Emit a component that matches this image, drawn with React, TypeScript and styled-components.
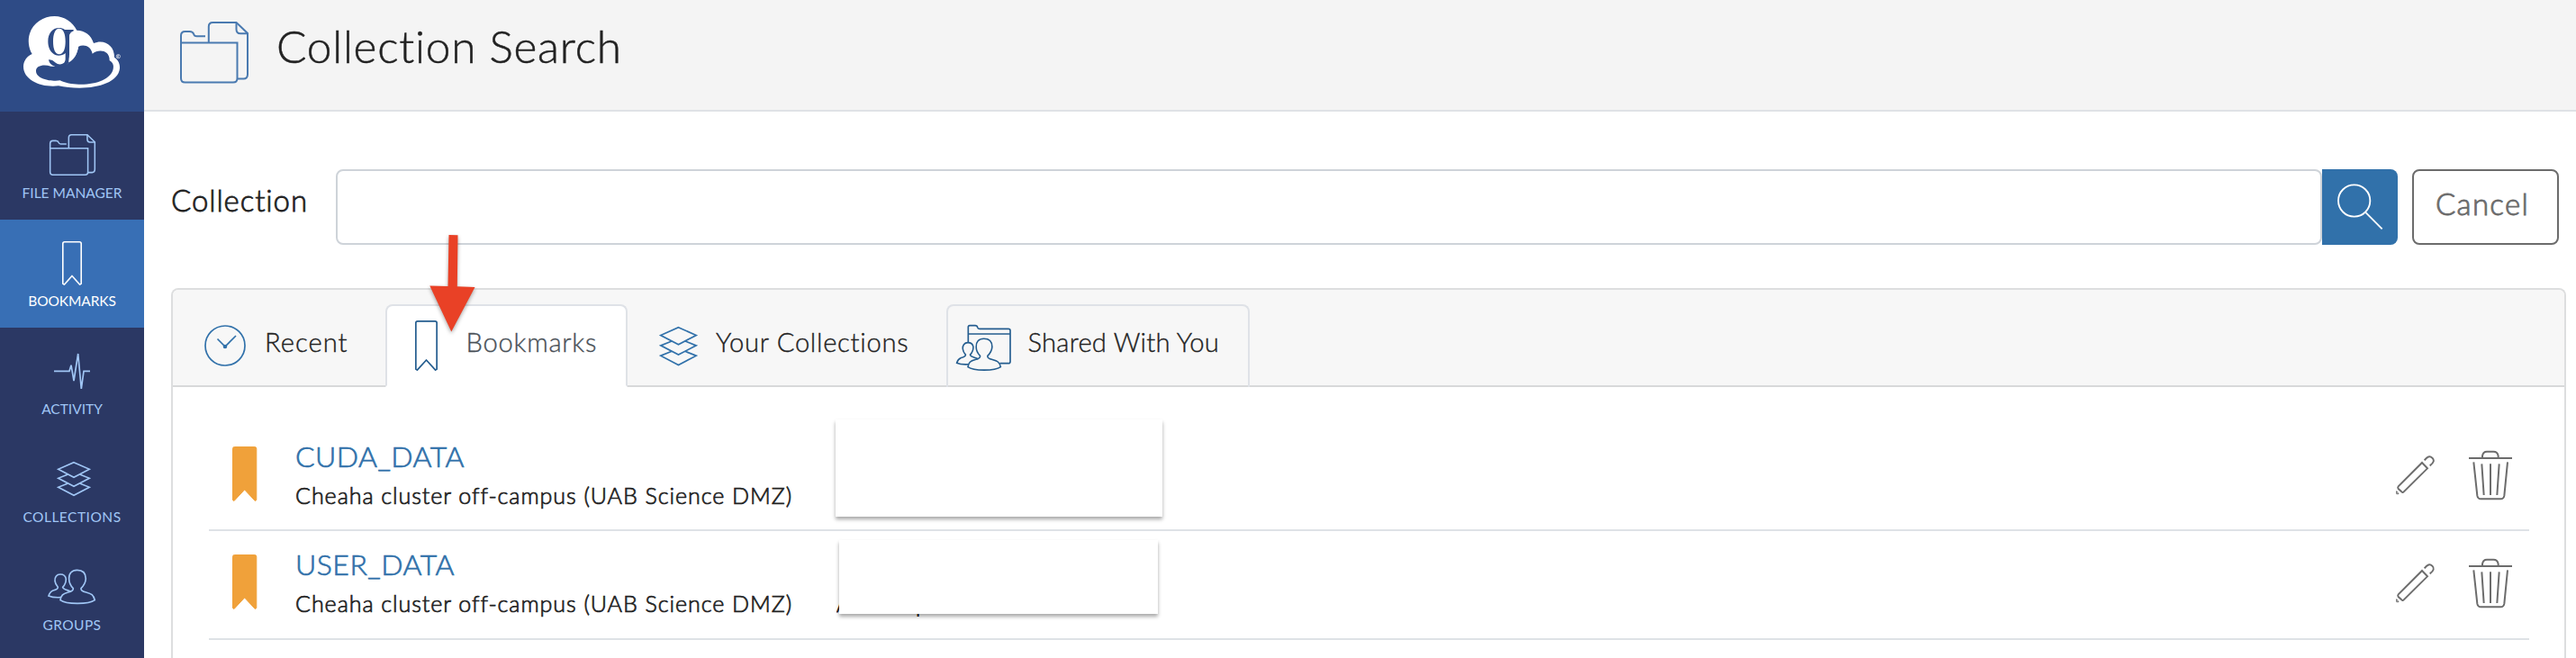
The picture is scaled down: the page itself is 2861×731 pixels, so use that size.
import React from 'react';
import styled, { createGlobalStyle } from 'styled-components';

const GlobalStyle = createGlobalStyle`
  *, *::before, *::after { box-sizing: border-box; }
  body { margin: 0; background: #fff; font-family: Lato, "Open Sans", sans-serif; color: #222; }
  svg { display: block; flex: none; fill: none; overflow: visible; }
`;

const Page = styled.div`
  display: flex;
  height: 731px;
  overflow: hidden;
  font-weight: 300;
`;

const Sidebar = styled.nav`
  flex: none;
  width: 160px;
  background: #2b3864;
`;

const LogoBox = styled.div`
  height: 124px;
  padding: 15px 0 0 23px;
  background: #2e4b86;
`;

const NavItem = styled.a<{ $active?: boolean }>`
  display: flex;
  flex-direction: column;
  align-items: center;
  height: 120px;
  color: ${p => (p.$active ? '#fff' : '#a0c6f5')};
  background: ${p => (p.$active ? '#386fb5' : 'transparent')};
`;

const NavIcon = styled.div<{ $shift?: number }>`
  display: flex;
  align-items: center;
  height: 72px;
  padding-top: 24px;
  margin: 0 0 8px ${p => p.$shift ?? 0}px;
`;

const NavLabel = styled.span<{ $spacing: number }>`
  font-size: 15.5px;
  font-weight: 400;
  line-height: 20px;
  white-space: nowrap;
  letter-spacing: ${p => p.$spacing}px;
`;

const Main = styled.main`
  flex: 1;
  min-width: 0;
  display: flex;
  flex-direction: column;
`;

const Header = styled.header`
  display: flex;
  gap: 31px;
  height: 124px;
  padding: 23.7px 0 0 40px;
  background: #f4f4f4;
  border-bottom: 2px solid #dfe2e6;
  color: #4a7ab0;
`;

const Title = styled.h1`
  margin: -2.6px 0 0;
  font-size: 49.5px;
  font-weight: 300;
  line-height: 60px;
  letter-spacing: 0.78px;
  color: #222;
  -webkit-text-stroke: 0.5px currentColor;
`;

const SearchForm = styled.div`
  display: flex;
  height: 84px;
  margin: 64px 19px 0 29px;
`;

const SearchLabel = styled.label`
  width: 184px;
  padding-left: 1px;
  font-size: 33px;
  line-height: 69px;
  letter-spacing: 0.9px;
  -webkit-text-stroke: 0.8px currentColor;
`;

const SearchInput = styled.input`
  flex: 1;
  min-width: 0;
  height: 84px;
  padding: 0 20px;
  font: inherit;
  background: #fff;
  border: 2px solid #ced3d9;
  border-radius: 8px;
  outline: none;
`;

const SearchButton = styled.button`
  display: flex;
  align-items: flex-start;
  width: 84px;
  height: 84px;
  margin: 0 16px 0 0;
  padding: 16px 0 0 17px;
  border: 0;
  border-radius: 0 8px 8px 0;
  background: #3171aa;
  color: #fff;
`;

const CancelButton = styled.button`
  width: 163px;
  height: 84px;
  padding: 0 0 8px 24px;
  text-align: left;
  font-family: inherit;
  font-size: 33px;
  font-weight: 300;
  line-height: 72px;
  letter-spacing: 1.3px;
  color: #6c6c6c;
  background: #fff;
  border: 2px solid #6c6c6c;
  border-radius: 8px;
  -webkit-text-stroke: 0.9px currentColor;
`;

const Panel = styled.section`
  flex: 1;
  margin: 48px 11px 0 30px;
  border: 2px solid #dddedf;
  border-bottom: 0;
  border-radius: 8px 8px 0 0;
`;

const TabBar = styled.div`
  display: flex;
  height: 108px;
  padding-top: 16px;
  background: #f7f7f7;
  border-bottom: 2px solid #d8d9da;
  border-radius: 6px 6px 0 0;
`;

const Tab = styled.div<{ $width: number; $inset: number; $state?: 'active' | 'outlined' }>`
  display: flex;
  width: ${p => p.$width}px;
  height: 92px;
  padding-left: ${p => p.$inset}px;
  border: 2px solid ${p => (p.$state ? '#dfe2e7' : 'transparent')};
  border-bottom-color: ${p => (p.$state === 'active' ? '#fff' : 'transparent')};
  border-bottom-width: ${p => (p.$state === 'active' ? 2 : 0)}px;
  border-radius: 8px 8px 0 0;
  background: ${p => (p.$state === 'active' ? '#fff' : 'transparent')};
  color: ${p => (p.$state ? '#245d8f' : '#3171aa')};
`;

const TabIcon = styled.div<{ $top: number; $gap: number }>`
  margin: ${p => p.$top}px ${p => p.$gap}px 0 0;
`;

const TabLabel = styled.span<{ $spacing: number; $muted?: boolean }>`
  font-size: 29.2px;
  line-height: 80px;
  white-space: nowrap;
  letter-spacing: ${p => p.$spacing}px;
  color: ${p => (p.$muted ? '#495057' : '#222')};
  -webkit-text-stroke: 0.35px currentColor;
`;

const List = styled.div`
  padding: 40px 39px 0 40px;
`;

const Row = styled.div`
  position: relative;
  display: flex;
  height: 120px;
  padding: 0 18px 0 26px;
  border-bottom: 2px solid #dee2e6;

  & + & { height: 121px; }
`;

const RowMark = styled.div`
  margin: 26px 42.7px 0 0;
  color: #f0a13a;
`;

const RowText = styled.div`
  width: 551px;
  padding-top: 16.6px;
  white-space: nowrap;
`;

const RowName = styled.div<{ $spacing: number }>`
  font-size: 32px;
  line-height: 40px;
  letter-spacing: ${p => p.$spacing}px;
  color: #3171aa;
  -webkit-text-stroke: 0.7px currentColor;
`;

const RowSource = styled.div`
  margin-top: 3.6px;
  font-size: 25.1px;
  line-height: 40px;
  letter-spacing: 0.93px;
  -webkit-text-stroke: 0.7px currentColor;
`;

const RowPath = styled.div`
  display: flex;
  gap: 72px;
  height: 34.5px;
  margin: 60px 0 0 50px;
  overflow: hidden;
  font-size: 24.5px;
  line-height: 41px;
  -webkit-text-stroke: 0.8px currentColor;
`;

const Cover = styled.div<{ $x: number; $y: number; $w: number; $h: number }>`
  position: absolute;
  left: ${p => p.$x}px;
  top: ${p => p.$y}px;
  width: ${p => p.$w}px;
  height: ${p => p.$h}px;
  background: #fff;
  box-shadow: 0 3px 4px rgba(0, 0, 0, 0.34);
`;

const RowActions = styled.div`
  display: flex;
  gap: 37px;
  margin-left: auto;
  padding-top: 30px;
  color: #6c6c6c;
`;

const Arrow = styled.div`
  position: absolute;
  left: 477px;
  top: 261px;
  filter: drop-shadow(0 2px 2px rgba(0, 0, 0, 0.35));
`;

const Logo = () => (
  <svg width="114" height="87" viewBox="69 45 342 261">
    <path
      fill="#fff"
      d="M107 180C95 161 92 133 99 112C110 76 145 54 182 54C214 54 243 74 256 101C282 101 304 117 312 144C346 129 382 150 381 191C395 200 400 214 399 228C394 272 332 293 265 293C240 293 215 291 195 286C140 293 78 268 78 222C78 203 90 187 107 180Z"
    />
    <path
      fill="#2e4b86"
      d="M190 222C206 222 224 216 231 207C250 196 258 176 261 155C280 146 303 153 308 179C328 163 366 166 365 202C376 208 380 218 377 230C370 263 320 283 262 281C240 281 215 276 200 268C172 272 120 264 120 236C120 219 145 213 170 221Z"
    />
    <path
      fill="#2e4b86"
      fillRule="evenodd"
      d="M197 93C174 93 160 112 160 138C160 157 167 172 180 181C187 187 208 187 218 177L218 196C218 215 200 217 190 212C182 208 176 198 162 199C164 212 174 220 190 224L215 222L232 207C228 200 231 192 231 180L231 120C231 112 236 109 245 105L245 99L216 99C210 95 204 93 197 93ZM197 95C211 95 218 112 218 138C218 164 211 181 197 181C184 181 177 164 177 138C177 112 184 95 197 95Z"
    />
    <path fill="#fff" d="M233 118C233 107 243 102 256 101L268 140L261 157C257 178 248 196 228 208C234 190 232 150 233 118Z" />
    <circle cx="394" cy="188" r="6.5" stroke="#fff" strokeWidth="1.8" />
    <path d="M392 192V184.500H395.500Q397 187 392 188.500L396.500 192" stroke="#fff" strokeWidth="1.6" />
  </svg>
);

const FilesIcon = ({ width, stroke }: { width: number; stroke: number }) => (
  <svg width={width} height={(width * 69) / 76} viewBox="0 0 76 69" stroke="currentColor" strokeWidth={stroke}>
    <path d="M1 23.500V15.500Q1 11 5.500 11H10.500Q14.200 11 15.200 14Q15.800 16.300 18.500 16.300H28" />
    <path d="M1 23.500H63.500V63Q63.500 67.500 59 67.500H5.500Q1 67.500 1 63Z" />
    <path d="M31.800 23V5.500Q31.800 1 36.300 1H62.500L75 13V58.500Q75 63.500 70.500 63.500H64" />
    <path d="M62.500 1V8.500Q62.500 13.300 67 13.300H75" />
  </svg>
);

const BookmarkIcon = ({ width, height, stroke, filled }: { width: number; height: number; stroke: number; filled?: boolean }) => {
  const s = stroke / 2;
  const r = width - s;
  const b = height - s;
  const notch = height - width * 0.48;
  const d = `M${s} ${s + 2}Q${s} ${s} ${s + 2} ${s}H${r - 2}Q${r} ${s} ${r} ${s + 2}V${b - 1}L${r - 1.5} ${b}L${width / 2} ${notch}L${s + 1.5} ${b}L${s} ${b - 1}Z`;
  return (
    <svg width={width} height={height} stroke="currentColor" strokeWidth={stroke} strokeLinejoin="round">
      <path d={d} fill={filled ? 'currentColor' : 'none'} />
    </svg>
  );
};

const PulseIcon = () => (
  <svg width="40" height="41" stroke="currentColor" strokeWidth="1.7">
    <path d="M0 20.300H17L19 13.700L22 31L26.700 1L30.300 40L33 20.300H40" />
  </svg>
);

const LayersIcon = ({ width, stroke }: { width: number; stroke: number }) => (
  <svg width={width} height={(width * 38) / 36} viewBox="0 0 36 38" stroke="currentColor" strokeWidth={stroke}>
    <path d="M18 .7L35.300 8.300L18 17.300L.7 8.300Z" />
    <path d="M11.500 14L.7 18.300L18 27.300L35.300 18.300L24.500 14" />
    <path d="M11.500 24L.7 28.300L18 37.300L35.300 28.300L24.500 24" />
  </svg>
);

const PeopleShapes = () => (
  <>
    <path d="M98 4C80 4 70 16 71 33C71 48 78 58 85 65C86 73 78 76 68 78C50 83 45 88 42 104C62 119 136 119 157 104C152 86 146 83 128 78C118 76 110 72 111 65C118 58 126 48 127 33C127 14 116 4 98 4Z" />
    <path d="M61 33C59 22 52 18 42 18C29 18 23 28 24 40C25 50 29 55 34 61C34 67 28 70 18 72C8 76 6 80 3 90C14 95 28 96 44 95M61 33C61 47 55 56 50 61C51 68 62 69 78 76" />
  </>
);

const PeopleIcon = () => (
  <svg width="53.300" height="40" viewBox="0 0 160 120" stroke="currentColor" strokeWidth="5">
    <PeopleShapes />
  </svg>
);

const ClockIcon = () => (
  <svg width="46" height="46" stroke="currentColor" strokeWidth="1.700">
    <circle cx="23" cy="23" r="22" />
    <path d="M14.500 15.500L23 24L35 12" />
    <circle cx="23" cy="24" r="2.300" fill="currentColor" stroke="none" />
  </svg>
);

const SharedIcon = () => (
  <svg width="64" height="54.700" viewBox="60 118 192 164" stroke="currentColor" strokeWidth="5">
    <path d="M106 184V131Q106 126 111 126H129Q136 126 137 132Q138 137 144 137H240Q246 137 246 143V246Q246 252 240 252H211M106 154H246" />
    <g transform="translate(65 166) scale(.95 .94)">
      <PeopleShapes />
    </g>
  </svg>
);

const SearchIcon = () => (
  <svg width="52" height="52" viewBox="107 102 156 156" stroke="currentColor" strokeWidth="5.500">
    <circle cx="163" cy="159" r="53" />
    <path d="M200 197L256 253" />
  </svg>
);

const PencilIcon = () => (
  <svg width="46" height="56" viewBox="54 60 138 168" stroke="currentColor" strokeWidth="5.800">
    <path d="M150 102L168 121L89 199Q85 203 81 198L71 189Q68 185 71 181Z" />
    <path d="M158 94Q172 75 184 86Q196 98 176 112" />
    <path d="M65 197V206H72Z" strokeWidth="3" />
  </svg>
);

const TrashIcon = () => (
  <svg width="50" height="56" viewBox="303 60 150 168" stroke="currentColor" strokeWidth="6">
    <path d="M306 87H450M351 86V80Q353 65 366 65H388Q402 65 404 80V86" />
    <path d="M322 100L334 212Q336 223 346 223H412Q422 223 424 212L435 100" />
    <path d="M349 106L356 210M378 106V210M407 106L400 210" />
  </svg>
);

const Marker = () => (
  <RowMark>
    <BookmarkIcon width={27.3} height={61} stroke={1} filled />
  </RowMark>
);

export default function App() {
  return (
    <Page>
      <GlobalStyle />
      <Sidebar>
        <LogoBox><Logo /></LogoBox>
        <NavItem>
          <NavIcon><FilesIcon width={51} stroke={2.3} /></NavIcon>
          <NavLabel $spacing={0}>FILE MANAGER</NavLabel>
        </NavItem>
        <NavItem $active>
          <NavIcon><BookmarkIcon width={22} height={49} stroke={1.6} /></NavIcon>
          <NavLabel $spacing={-0.1}>BOOKMARKS</NavLabel>
        </NavItem>
        <NavItem>
          <NavIcon><PulseIcon /></NavIcon>
          <NavLabel $spacing={0}>ACTIVITY</NavLabel>
        </NavItem>
        <NavItem>
          <NavIcon $shift={3}><LayersIcon width={36} stroke={1.6} /></NavIcon>
          <NavLabel $spacing={0.5}>COLLECTIONS</NavLabel>
        </NavItem>
        <NavItem>
          <NavIcon><PeopleIcon /></NavIcon>
          <NavLabel $spacing={0.4}>GROUPS</NavLabel>
        </NavItem>
      </Sidebar>
      <Main>
        <Header>
          <FilesIcon width={76} stroke={2} />
          <Title>Collection Search</Title>
        </Header>
        <SearchForm>
          <SearchLabel htmlFor="collection">Collection</SearchLabel>
          <SearchInput id="collection" />
          <SearchButton aria-label="Search"><SearchIcon /></SearchButton>
          <CancelButton>Cancel</CancelButton>
        </SearchForm>
        <Panel>
          <TabBar>
            <Tab $width={236} $inset={33}>
              <TabIcon $top={21} $gap={21}><ClockIcon /></TabIcon>
              <TabLabel $spacing={1}>Recent</TabLabel>
            </Tab>
            <Tab $width={269} $inset={31} $state="active">
              <TabIcon $top={16} $gap={31.5}><BookmarkIcon width={25} height={56} stroke={1.7} /></TabIcon>
              <TabLabel $spacing={0.75} $muted>Bookmarks</TabLabel>
            </Tab>
            <Tab $width={354} $inset={34}>
              <TabIcon $top={23} $gap={21}><LayersIcon width={41} stroke={1.5} /></TabIcon>
              <TabLabel $spacing={0.7}>Your Collections</TabLabel>
            </Tab>
            <Tab $width={337} $inset={7} $state="outlined">
              <TabIcon $top={19.3} $gap={17.5}><SharedIcon /></TabIcon>
              <TabLabel $spacing={0.23}>Shared With You</TabLabel>
            </Tab>
          </TabBar>
          <List>
            <Row>
              <Marker />
              <RowText>
                <RowName $spacing={0.45}>CUDA_DATA</RowName>
                <RowSource>Cheaha cluster off-campus (UAB Science DMZ)</RowSource>
              </RowText>
              <Cover $x={696} $y={-4} $w={363} $h={108} />
              <RowActions><PencilIcon /><TrashIcon /></RowActions>
            </Row>
            <Row>
              <Marker />
              <RowText>
                <RowName $spacing={0.5}>USER_DATA</RowName>
                <RowSource>Cheaha cluster off-campus (UAB Science DMZ)</RowSource>
              </RowText>
              <RowPath><span>A</span><span>p</span></RowPath>
              <Cover $x={700} $y={10} $w={354} $h={82} />
              <RowActions><PencilIcon /><TrashIcon /></RowActions>
            </Row>
          </List>
        </Panel>
      </Main>
      <Arrow>
        <svg width="52" height="108">
          <path fill="#e94126" d="M21.500 0L31.500 .3L30.800 57.300L50.500 58L24.300 107.500L.3 56.500L20.500 57Z" />
        </svg>
      </Arrow>
    </Page>
  );
}
